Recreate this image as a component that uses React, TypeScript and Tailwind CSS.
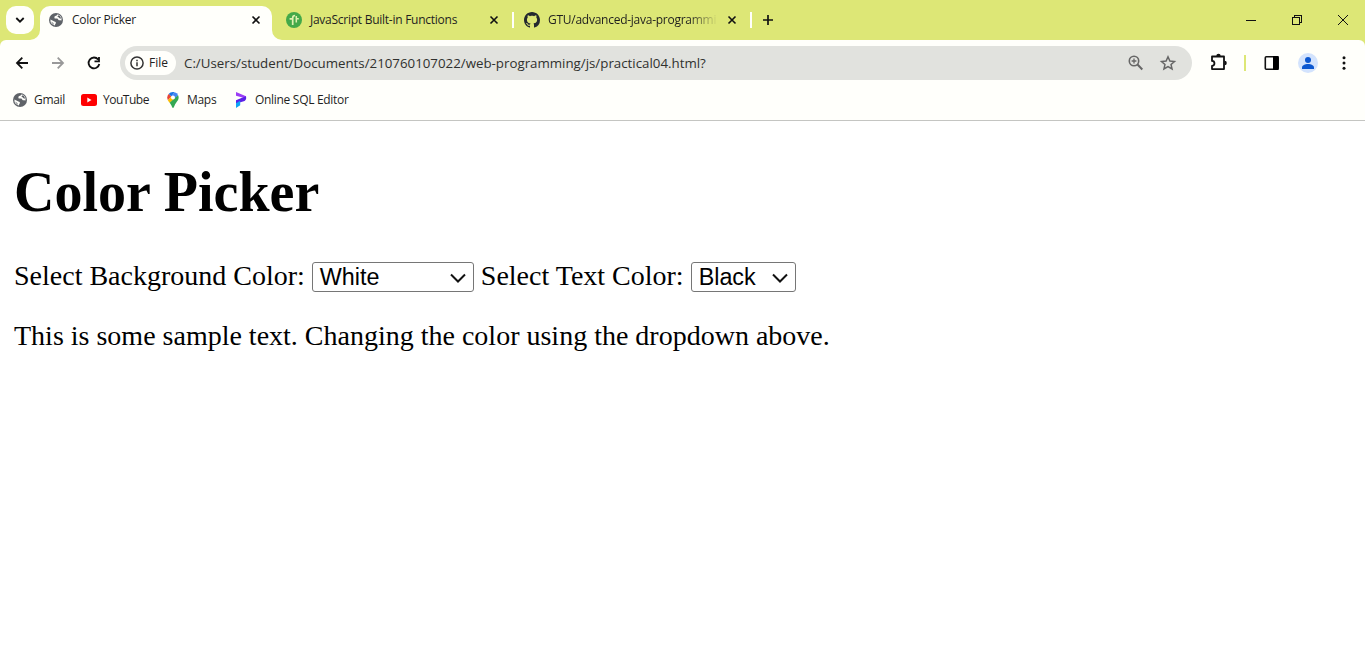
import React from 'react';

const ui = "font-['Open_Sans','Noto_Sans',sans-serif] whitespace-nowrap";

function Globe() {
  return (
    <svg width="16" height="16" viewBox="0 0 16 16" className="shrink-0" fill="none">
      <circle cx="8" cy="8" r="7" fill="#5f6368" />
      <path d="M9.600 2.300C9.400 4 6.400 3.600 6.400 5.400c0 1.500 1.600 1.200 2.600 1.200 1.300 0 1 1.600 2 1.700 1 .1 1.500.1 2.500.2a5.600 5.600 0 0 0-3.900-6.200z" fill="#fffffb" />
      <path d="M2.400 7.600l4 1.800c1 .3 1.700.5 1.500 1.600-.1.700-.9.900-1 2.400A5.600 5.600 0 0 1 2.400 7.600z" fill="#fffffb" />
      <path d="M9.200 4.600c.8-.3 1.200-.8 1.500-1.500l1.600 1.500.9 2.200-1.700-.5c-.5-.8-1.300-1.300-2.300-1.700z" fill="#5f6368" />
      <path d="M2.800 9.400l2.500 1.500c.3.600.3 1.200.3 1.900z" fill="#5f6368" />
    </svg>
  );
}

function Close() {
  return (
    <svg width="10" height="10" viewBox="0 0 10 10" className="shrink-0" fill="none" stroke="#111" strokeWidth="1.6">
      <path d="M1.5 1.5l7 7M8.5 1.5l-7 7" />
    </svg>
  );
}

function GitHubMark() {
  return (
    <svg width="16" height="16" viewBox="0 0 16 16" className="shrink-0" fill="#24292f">
      <path d="M8 0C3.58 0 0 3.58 0 8c0 3.54 2.29 6.53 5.47 7.59.4.07.55-.17.55-.38 0-.19-.01-.82-.01-1.49-2.01.37-2.53-.49-2.69-.94-.09-.23-.48-.94-.82-1.13-.28-.15-.68-.52-.01-.53.63-.01 1.08.58 1.23.82.72 1.21 1.87.87 2.33.66.07-.52.28-.87.51-1.07-1.78-.2-3.64-.89-3.64-3.95 0-.87.31-1.59.82-2.15-.08-.2-.36-1.02.08-2.12 0 0 .67-.21 2.2.82.64-.18 1.32-.27 2-.27.68 0 1.36.09 2 .27 1.53-1.04 2.2-.82 2.2-.82.44 1.1.16 1.92.08 2.12.51.56.82 1.27.82 2.15 0 3.07-1.87 3.75-3.65 3.95.29.25.54.73.54 1.48 0 1.07-.01 1.93-.01 2.2 0 .21.15.46.55.38A8.013 8.013 0 0016 8c0-4.42-3.58-8-8-8z" />
    </svg>
  );
}

function TutorialMark() {
  return (
    <svg width="16" height="16" viewBox="0 0 16 16" className="shrink-0" fill="none">
      <circle cx="8" cy="8" r="8" fill="#43a949" />
      <path d="M3.600 6.800h3.600M6.700 13V6c0-1.600.8-2.500 2.400-2.500" stroke="#dff0b0" strokeWidth="1.700" />
      <path d="M10.300 4v6.500M10 6.800h2.800" stroke="#dff0b0" strokeWidth="1.500" />
    </svg>
  );
}

function TabStrip() {
  const title = `${ui} text-[12px] tracking-[-0.26px] text-[#1f1f1f]`;
  return (
    <div className="flex h-10 bg-[#dde776]">
      <div className="flex w-10 pl-1.5 pt-1.5">
        <div className="flex h-7 w-7 items-center justify-center rounded-[10px] bg-[#fffffb]">
          <svg width="10" height="8" viewBox="0 0 10 8" fill="none" stroke="#111" strokeWidth="1.8">
            <path d="M1.3 2L5 5.7 8.7 2" />
          </svg>
        </div>
      </div>
      <div className="relative mt-1.5 flex h-[34px] w-[232px] items-center rounded-t-[10px] bg-[#fffffb] pb-1.5 pl-2 pr-[11px]">
        <svg className="absolute -left-2.5 bottom-0" width="10" height="10" fill="#fffffb"><path d="M10 0v10H0A10 10 0 0 0 10 0z" /></svg>
        <svg className="absolute -right-2.5 bottom-0" width="10" height="10" fill="#fffffb"><path d="M0 0v10h10A10 10 0 0 1 0 0z" /></svg>
        <Globe />
        <span className={`${title} ml-2 flex-1`}>Color Picker</span>
        <Close />
      </div>
      <div className="flex w-[240px] items-center pl-3.5">
        <TutorialMark />
        <span className={`${title} ml-2 w-[179px]`}>JavaScript Built-in Functions</span>
        <Close />
      </div>
      <div className="flex w-[240px] items-center">
        <span className="h-4 w-0.5 bg-[#fffffb]" />
        <span className="ml-2.5 flex"><GitHubMark /></span>
        <span className={`${title} ml-2 w-[168px] [mask-image:linear-gradient(to_right,black_140px,transparent_170px)]`}>GTU/advanced-java-programmi</span>
        <span className="ml-[11px] flex"><Close /></span>
      </div>
      <div className="flex flex-1 items-center">
        <span className="-ml-0.5 h-4 w-0.5 bg-[#fffffb]" />
        <svg className="ml-2.5" width="12" height="12" viewBox="0 0 12 12" fill="none" stroke="#111" strokeWidth="1.7">
          <path d="M6 1v10M1 6h10" />
        </svg>
      </div>
      <svg width="138" height="40" viewBox="0 0 138 40" fill="none" stroke="#111" shapeRendering="crispEdges">
        <path d="M19 20.5h10M65.5 17.5h7v7h-7zM67.5 17v-1.500h7v7H73" />
        <path d="M111 15l10 10M121 15l-10 10" shapeRendering="auto" />
      </svg>
    </div>
  );
}

function Toolbar() {
  return (
    <div className="flex h-[46px] items-center rounded-t-md bg-[#fffffb]">
      <svg width="120" height="46" viewBox="0 0 120 46" className="shrink-0" fill="none" strokeWidth="1.8">
        <path d="M28 23H17M22.300 17.700L17 23l5.300 5.300" stroke="#111" />
        <path d="M52 23h11M57.700 17.700L63 23l-5.300 5.300" stroke="#999" />
        <path d="M98.200 19.500A5.400 5.400 0 1 0 99.300 24M99 17v4.300h-4.500" stroke="#111" />
      </svg>
      <div className="flex h-[34px] w-[1072px] items-center rounded-full bg-[#e1e2de] pl-[5px]">
        <div className="flex h-6 w-[51px] items-center rounded-full bg-[#fffffb] pl-[5px]">
          <svg width="14" height="14" viewBox="0 0 14 14" fill="none" stroke="#333" strokeWidth="1.5">
            <circle cx="7" cy="7" r="6.100" />
            <path d="M7 6.200v4M7 3.700v1.500" />
          </svg>
          <span className={`${ui} ml-[5px] text-[12px] text-[#222]`}>File</span>
        </div>
        <span className={`${ui} ml-2 flex-1 pt-0.5 text-[13.3px] text-[#30312e]`}>C:/Users/student/Documents/210760107022/web-programming/js/practical04.html?</span>
        <svg className="mr-2" width="64" height="34" viewBox="0 0 64 34" fill="none" stroke="#666" strokeWidth="1.600">
          <circle cx="14" cy="15" r="4.700" />
          <path d="M17.500 18.500L22.300 23.500" strokeWidth="2" />
          <path d="M14 12.600v4.800M11.600 15h4.800" strokeWidth="1.300" />
          <path d="M48 10.800l1.900 4.200 4.600.5-3.450 3.050 1 4.450L48 20.600l-4.050 2.400 1-4.450-3.450-3.050 4.600-.5z" strokeWidth="1.500" />
        </svg>
      </div>
      <svg width="173" height="46" viewBox="0 0 173 46" className="shrink-0" fill="none">
        <path d="M20.500 16.500H32v12.600H20v-3.300a2.200 2.200 0 0 0 0-4.900v-4.400z" stroke="#111" strokeWidth="1.800" strokeLinejoin="round" />
        <path d="M24.300 16a2.200 2.200 0 0 1 4.400 0zM32.600 20.800a2.200 2.200 0 0 1 0 4.400z" fill="#111" />
        <path d="M52 15h2v16h-2z" fill="#dde776" />
        <rect x="73.300" y="16.800" width="12.900" height="12.400" rx="1" stroke="#111" strokeWidth="1.600" />
        <path d="M81 16h5.500v14H81z" fill="#000" />
        <circle cx="116" cy="23" r="10" fill="#d3e3fd" />
        <circle cx="116" cy="20" r="3" fill="#0b57d0" />
        <path d="M110 29v-1.600c0-2 3-3.400 6-3.400s6 1.400 6 3.400V29z" fill="#0b57d0" />
        <g fill="#111"><circle cx="152" cy="17.700" r="1.500" /><circle cx="152" cy="23" r="1.500" /><circle cx="152" cy="28.300" r="1.500" /></g>
      </svg>
    </div>
  );
}

function Bookmarks() {
  const label = `${ui} text-[12px] tracking-[-0.3px] text-[#1f1f1f]`;
  return (
    <div className="flex h-[35px] items-center border-b border-[#c4c5c2] bg-[#fffffb] pb-1.5 pl-3">
      <div className="flex w-[69px] items-center">
        <Globe />
        <span className={`${label} ml-1.5`}>Gmail</span>
      </div>
      <div className="flex w-[86px] items-center">
        <svg width="16" height="12" viewBox="0 0 16 12"><rect width="16" height="12" rx="2.500" fill="#f00" /><path d="M6.300 3.500L10.500 6 6.300 8.500z" fill="#fff" /></svg>
        <span className={`${ui} ml-1.5 text-[12px] tracking-[-0.48px] text-[#1f1f1f]`}>YouTube</span>
      </div>
      <div className="flex w-[67px] items-center">
        <svg width="12" height="16" viewBox="0 0 12 16">
          <path d="M6 0a5.600 5.600 0 0 0-4.400 2.100L4.300 4.400 7.700.3A6 6 0 0 0 6 0z" fill="#1a73e8" />
          <path d="M1.600 2.100A5.700 5.700 0 0 0 .9 8.200L4.300 4.400z" fill="#ea4335" />
          <path d="M7.700.3a5.600 5.600 0 0 1 3.400 2.900L7.700 7.100 4.300 4.400z" fill="#4285f4" />
          <path d="M.9 8.200c.4.900 1 1.700 1.700 2.600L7.700 7.100 4.300 4.400z" fill="#fbbc04" />
          <path d="M11.100 3.200c1.400 3.200-.2 5.300-1.800 7.400C7.400 13 7.200 16 6 16c-1.100 0-1-2.500-3.400-5.200z" fill="#34a853" />
          <circle cx="6" cy="5.500" r="2" fill="#fff" />
        </svg>
        <span className={`${label} ml-2`}>Maps</span>
      </div>
      <div className="flex items-center">
        <svg width="14" height="16" viewBox="0 0 14 16">
          <path d="M2 0l10 4.200v2.300L2 3.800z" fill="#9b3df5" />
          <path d="M12 4.200c.8 3-.5 4.800-3 5.300L2 11.500V8.300l6-2.500z" fill="#5b21e8" />
          <path d="M2 11.200l4.200-2.400v4.400L2 16z" fill="#0ea5f5" />
        </svg>
        <span className={`${label} ml-[7px]`}>Online SQL Editor</span>
      </div>
    </div>
  );
}

function Picker({ value, className }: { value: string; className: string }) {
  return (
    <button className={`${className} flex h-[30px] items-center justify-between rounded-[3px] border border-[#767676] bg-white px-[7px] font-['Liberation_Sans',sans-serif] text-[23.333px] leading-none`}>
      <span className="pt-0.5">{value}</span>
      <svg className="mt-0.5" width="16" height="10" viewBox="0 0 16 10" fill="none" stroke="#111" strokeWidth="2"><path d="M1 1.500l7 7 7-7" /></svg>
    </button>
  );
}

export default function App() {
  return (
    <div className="flex h-[672px] w-[1365px] flex-col overflow-hidden bg-white">
      <div className="bg-[#dde776]">
        <TabStrip />
        <Toolbar />
      </div>
      <Bookmarks />
      <main className="px-3.5 pt-[39px] font-['Liberation_Serif',serif] text-[28px] text-black">
        <h1 className="text-[56px] font-bold leading-[64px]">Color Picker</h1>
        <div className="mt-[37px] flex h-8 items-center whitespace-nowrap">
          <span className="pb-0.5 leading-[30px]">Select Background Color:</span>
          <Picker value="White" className="ml-[7px] w-[162px]" />
          <span className="ml-[7px] pb-0.5 leading-[30px]">Select Text Color:</span>
          <Picker value="Black" className="ml-[7px] w-[105px]" />
        </div>
        <p className="mt-[27px] leading-8">This is some sample text. Changing the color using the dropdown above.</p>
      </main>
    </div>
  );
}
